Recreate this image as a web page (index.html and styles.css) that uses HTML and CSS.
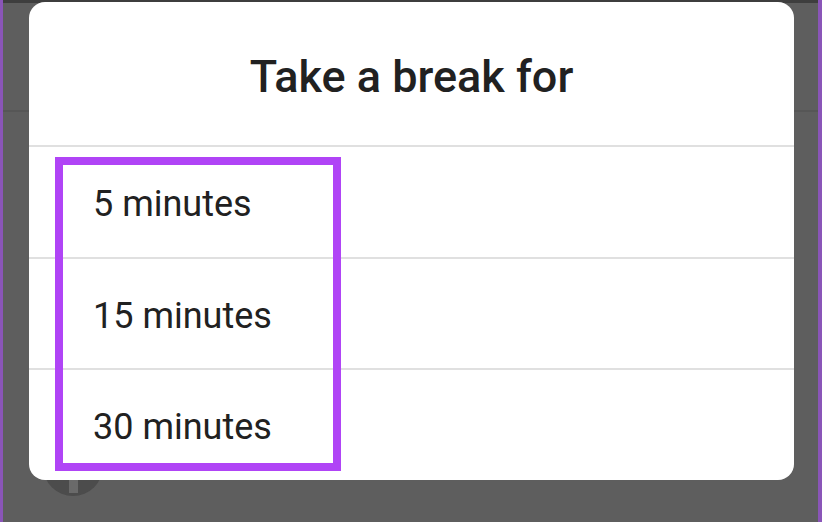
FILE: index.html
```html
<!DOCTYPE html>
<html>
<head>
<meta charset="utf-8">
<link rel="stylesheet" href="styles.css">
</head>
<body>
<div class="screen">
  <div class="edge edge-left"></div>
  <div class="stage">
    <div class="topbar"></div>
    <div class="bgline"></div>
    <div class="avatar"><span class="avatar-stem"></span></div>
    <div class="dialog">
      <div class="title">Take a break for</div>
      <div class="option">5 minutes</div>
      <div class="option">15 minutes</div>
      <div class="option">30 minutes</div>
    </div>
    <div class="highlight"></div>
  </div>
  <div class="edge edge-right"></div>
</div>
</body>
</html>
```

FILE: styles.css
```css
html, body {
  margin: 0;
  padding: 0;
  width: 822px;
  height: 522px;
  overflow: hidden;
  font-family: Roboto, "Noto Sans", sans-serif;
}
.screen {
  display: flex;
  width: 822px;
  height: 522px;
  background: #5e5e5e;
}
.edge {
  width: 3px;
  background: #8a55b8;
}
.edge-right {
  width: 4px;
}
.stage {
  position: relative;
  flex: 1;
  padding: 2px 24px 0 26px;
}
.topbar {
  position: absolute;
  left: 0;
  right: 0;
  top: 0;
  height: 3px;
  background: #3e3e3e;
}
.bgline {
  position: absolute;
  left: 0;
  right: 0;
  top: 110px;
  height: 2px;
  background: #565656;
}
.avatar {
  position: absolute;
  left: 40px;
  top: 436px;
  width: 60px;
  height: 60px;
  border-radius: 50%;
  background: #4c4c4c;
}
.avatar-stem {
  position: absolute;
  left: 26px;
  top: 40px;
  width: 9px;
  height: 17px;
  background: #6a6a6a;
}
.dialog {
  position: relative;
  display: flex;
  flex-direction: column;
  background: #fff;
  border-radius: 16px;
  height: 478px;
  overflow: hidden;
}
.title {
  display: flex;
  align-items: center;
  justify-content: center;
  font-size: 45px;
  font-weight: 500;
  color: #212121;
  border-bottom: 2px solid #e0e0e0;
  padding-top: 6px;
  box-sizing: border-box;
  height: 145px;
}
.option {
  flex: 1;
  display: flex;
  align-items: center;
  padding-left: 64px;
  padding-top: 4px;
  font-size: 36px;
  color: #212121;
  border-bottom: 2px solid #e0e0e0;
}
.option:last-child {
  border-bottom: none;
}
.highlight {
  position: absolute;
  left: 52px;
  top: 157px;
  width: 270px;
  height: 298px;
  border: 8px solid #b044f6;
}
```
